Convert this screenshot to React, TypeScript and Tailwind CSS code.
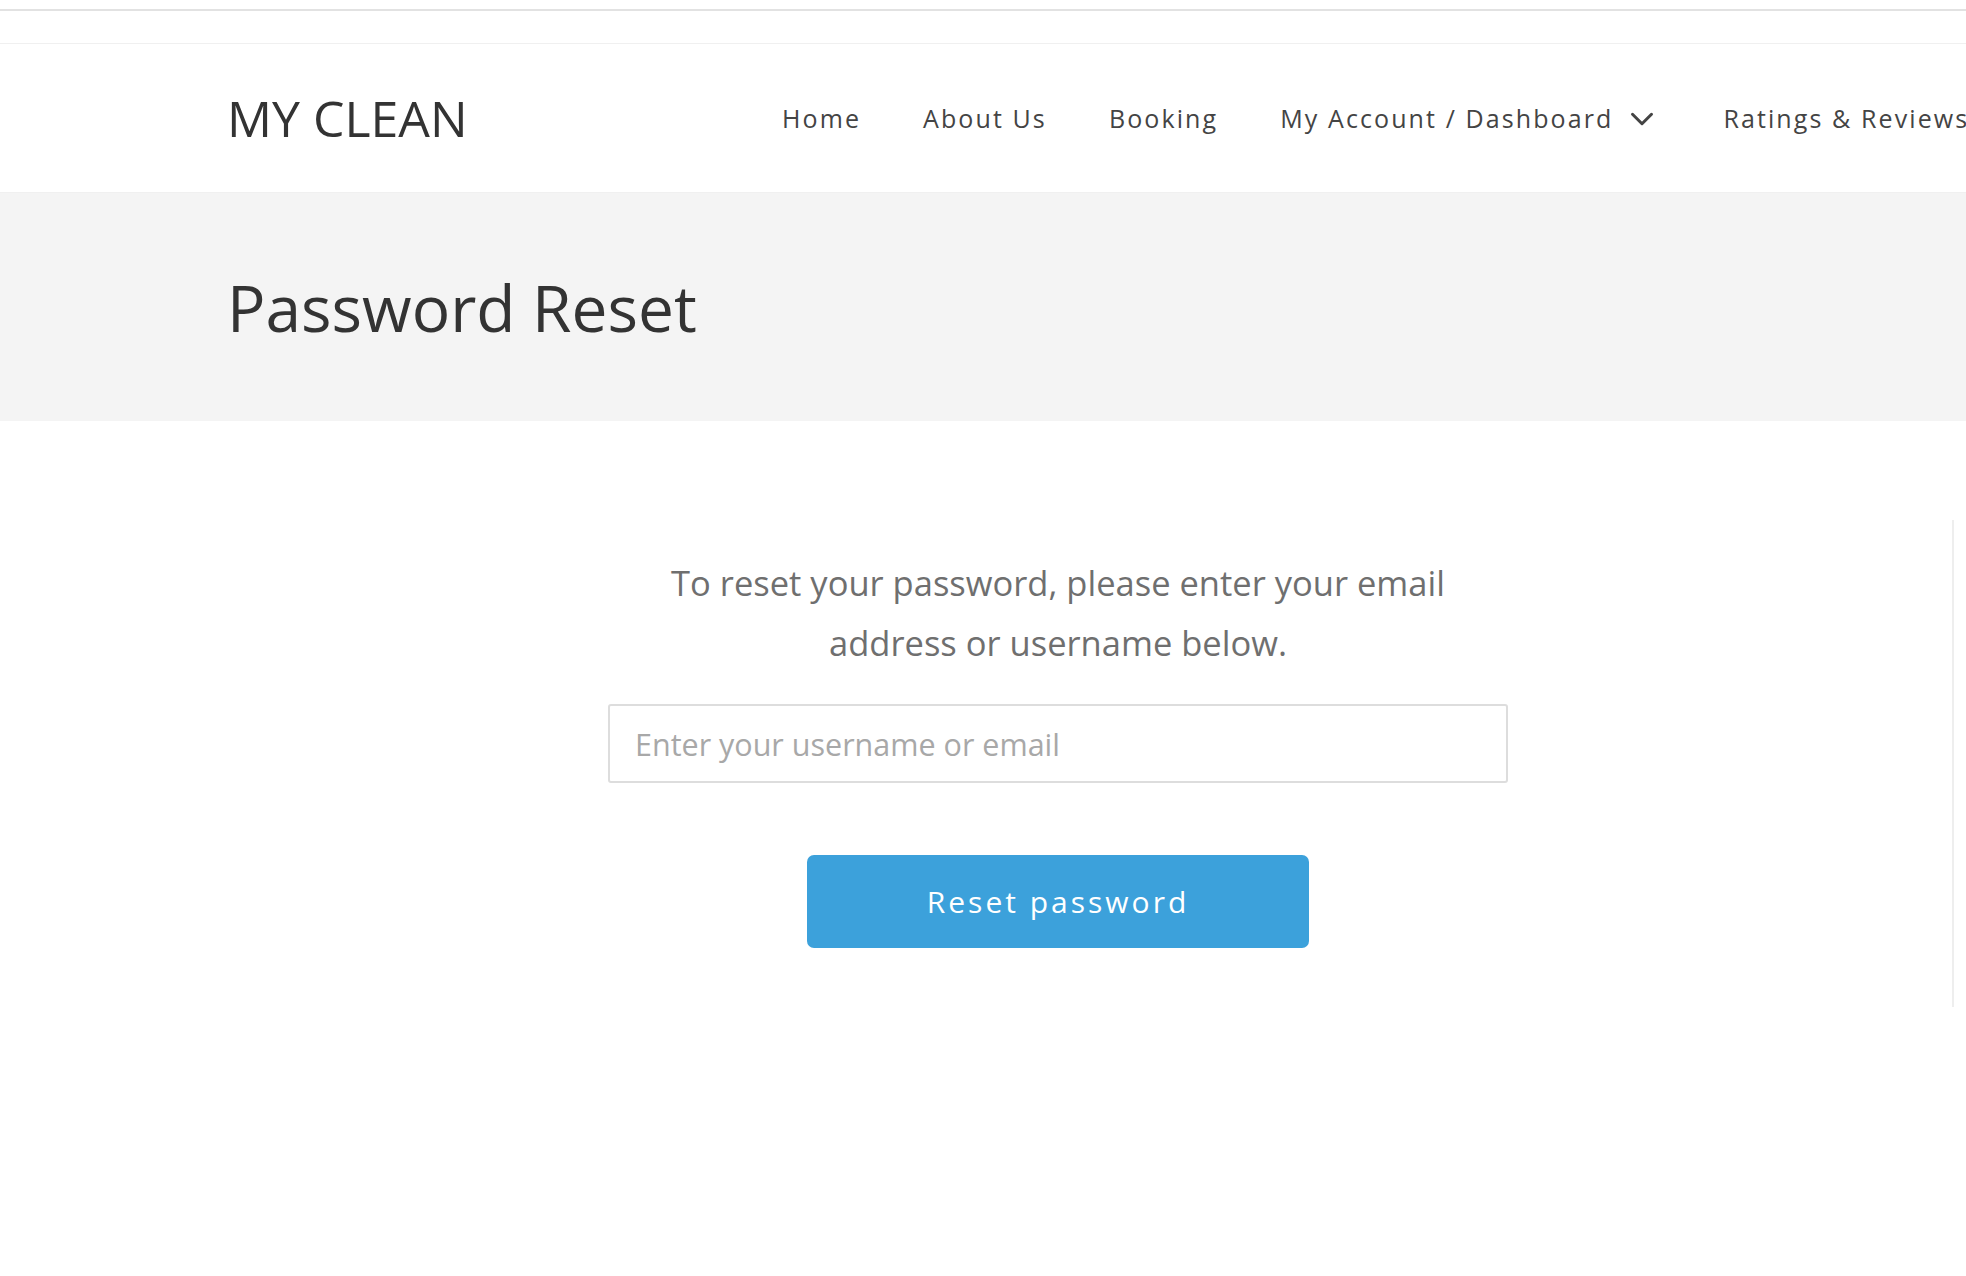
import { ChevronDown } from "lucide-react";

export default function App() {
    return (
        <div className="relative w-[1966px] h-[1276px] overflow-hidden bg-white font-['Open_Sans',sans-serif]">
            {/* top strip */}
            <div className="h-[35px] mt-[9px] border-t-2 border-[#e2e2e2] border-b border-b-[#f0f0f0]" />

            {/* Header */}
            <header className="h-[149px] flex items-center pl-[227px] border-b border-[#f0f0f0]">
                <div className="shrink-0 text-[50px] leading-none text-[#333] w-[555px] whitespace-nowrap">MY CLEAN</div>
                <nav className="shrink-0 flex items-center gap-[62px] pt-[2px] text-[25px] tracking-[2.1px] text-[#444] whitespace-nowrap">
                    <a>Home</a>
                    <a>About Us</a>
                    <a>Booking</a>
                    <a className="flex items-center gap-[10px]">
                        My Account / Dashboard
                        <ChevronDown className="w-[38px] h-[38px]" strokeWidth={1.9} />
                    </a>
                    <a>Ratings &amp; Reviews</a>
                </nav>
            </header>

            {/* Page title band */}
            <div className="h-[228px] bg-[#f4f4f4] flex items-center pl-[227px]">
                <h1 className="text-[64px] text-[#333] leading-none pt-[2px]">Password Reset</h1>
            </div>

            {/* Content */}
            <main className="pl-[227px] pr-[77px] pt-[132px]">
                <div className="flex flex-col items-center">
                    <p className="text-[34.5px] leading-[60px] text-[#6f6f6f] text-center w-[820px]">
                        To reset your password, please enter your email address or username below.
                    </p>
                    <input
                        type="text"
                        placeholder="Enter your username or email"
                        className="mt-[31px] w-[900px] h-[79px] border-2 border-[#dddddd] rounded-[3px] px-[25px] text-[30.5px] text-[#555] placeholder:text-[#a8a8a8] outline-none"
                    />
                    <button className="mt-[72px] w-[502px] h-[93px] rounded-[7px] bg-[#3ca1db] text-white text-[30px] tracking-[3px]">
                        Reset password
                    </button>
                </div>
            </main>

            {/* right edge divider */}
            <div className="absolute left-[1952px] top-[520px] w-[2px] h-[487px] bg-[#eeeeee]" />
        </div>
    );
}
